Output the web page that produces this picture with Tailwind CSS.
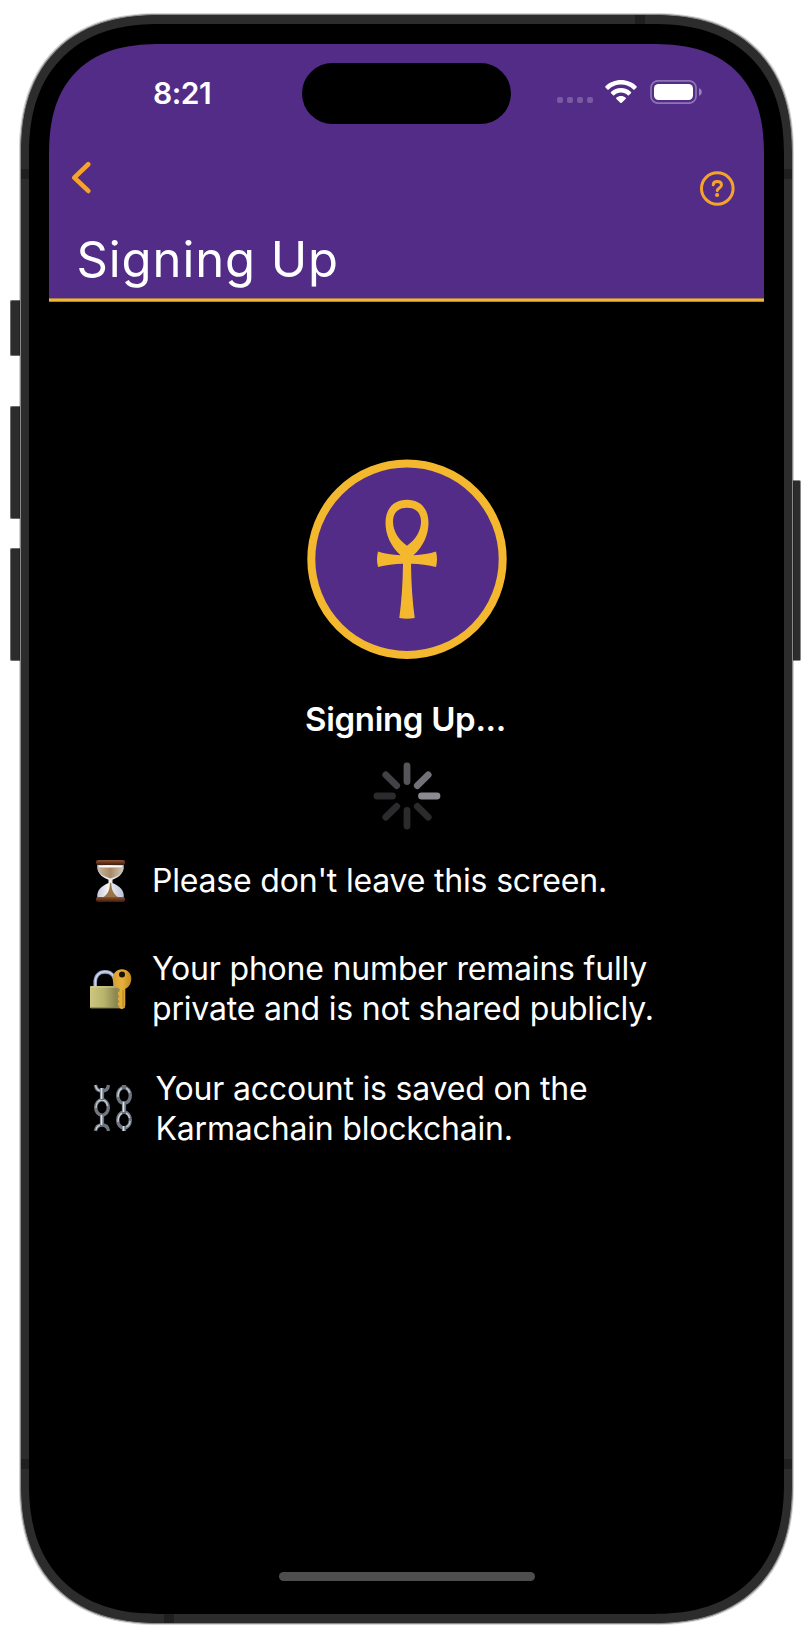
<!DOCTYPE html>
<html lang="en">
<head>
<meta charset="utf-8">
<title>Signing Up</title>
<script src="https://cdn.jsdelivr.net/npm/@tailwindcss/browser@4"></script>
</head>
<body class="bg-white font-['Inter',sans-serif] text-white">
<div class="relative w-[812px] h-[1628px] overflow-hidden pl-5 pt-3.5">
  <!-- side buttons -->
  <div class="absolute left-[10px] top-[300px] w-[10px] h-[56px] bg-[#2c2c2c] border border-r-0 border-[#6d6d6d] rounded-l-[2px]"></div>
  <div class="absolute left-[10px] top-[406px] w-[10px] h-[113px] bg-[#2c2c2c] border border-r-0 border-[#6d6d6d] rounded-l-[2px]"></div>
  <div class="absolute left-[10px] top-[548px] w-[10px] h-[113px] bg-[#2c2c2c] border border-r-0 border-[#6d6d6d] rounded-l-[2px]"></div>
  <div class="absolute left-[792px] top-[480px] w-[9px] h-[181px] bg-[#2c2c2c] border border-l-0 border-[#8a8a8a] rounded-r-[2px]"></div>

  <div class="relative w-[773px] h-[1610px] rounded-[122px] supports-[corner-shape:round]:rounded-[140px] [corner-shape:superellipse(1.235)] border border-[#8a8a8a] bg-[#2c2c2c] pt-[9px] px-2 pb-[9px] overflow-hidden shadow-[0_0_0_1px_rgba(0,0,0,0.17)]">
    <!-- antenna bands -->
    <div class="absolute left-0 top-[154px] w-full h-[10px] bg-[#1f1f1f]"></div>
    <div class="absolute left-0 top-[1444px] w-full h-[10px] bg-[#1f1f1f]"></div>
    <div class="absolute left-[614px] top-0 w-[10px] h-3 bg-[#1f1f1f]"></div>
    <div class="absolute left-[143px] bottom-0 w-[10px] h-3 bg-[#1f1f1f]"></div>

    <div class="relative w-full h-full rounded-[114px] supports-[corner-shape:round]:rounded-[131px] [corner-shape:superellipse(1.235)] bg-black pt-5 px-5 pb-5">
      <main class="relative flex flex-col items-center w-[715px] h-[1549px] rounded-[94px] supports-[corner-shape:round]:rounded-[112px] [corner-shape:superellipse(1.3)] bg-black overflow-hidden">
        <header class="flex flex-col w-full h-[258px] shrink-0 bg-[#522c86]">
          <div class="flex h-[98px] w-full items-center">
            <div class="ml-[104px] w-[150px] text-[30px] font-semibold leading-[40px] tracking-[-0.5px]">8:21</div>
            <div class="ml-[-1px] mt-px w-[209px] h-[61px] rounded-full bg-black"></div>
            <div class="ml-[46px] mt-[14px] flex gap-[4px]">
              <i class="w-[6px] h-[6px] rounded-[2px] bg-[#7a5ba2]"></i><i class="w-[6px] h-[6px] rounded-[2px] bg-[#7a5ba2]"></i><i class="w-[6px] h-[6px] rounded-[2px] bg-[#7a5ba2]"></i><i class="w-[6px] h-[6px] rounded-[2px] bg-[#7a5ba2]"></i>
            </div>
            <svg class="ml-[12px] w-8 h-6 -mt-[3px]" viewBox="0 0 32 24" fill="#fff">
              <path d="M16 0C22 0 27.600 2.300 31.500 6.200Q32.100 6.900 31.500 7.600L29.600 9.500Q29 10.100 28.300 9.500C25 6.300 20.600 4.600 16 4.600S7 6.300 3.700 9.500Q3 10.100 2.400 9.500L.5 7.600Q-.1 6.900.5 6.200C4.400 2.300 10 0 16 0Z"/>
              <path d="M16 8C19.900 8 23.400 9.500 26 12Q26.600 12.700 26 13.300L23.900 15.300Q23.300 15.900 22.700 15.300C20.900 13.600 18.600 12.600 16 12.600S11.100 13.600 9.300 15.300Q8.700 15.900 8.100 15.300L6 13.300Q5.400 12.700 6 12C8.600 9.500 12.100 8 16 8Z"/>
              <path d="M16 16C17.800 16 19.400 16.600 20.600 17.600Q21.300 18.200 20.600 18.900L16.700 22.700Q16 23.400 15.300 22.700L11.400 18.900Q10.700 18.200 11.400 17.600C12.600 16.600 14.200 16 16 16Z"/>
            </svg>
            <svg class="ml-[13px] w-[54px] h-6 -mt-[3px]" viewBox="0 0 54 24" fill="none">
              <rect x="1" y=".8" width="45" height="22.400" rx="7" stroke="#8f74b2" stroke-width="1.700"/>
              <rect x="4" y="4" width="39" height="16" rx="4.500" fill="#fff"/>
              <path d="M49 8.200V15.800C50.700 15.200 51.800 13.700 51.800 12S50.700 8.800 49 8.200Z" fill="#9a82ba"/>
            </svg>
          </div>
          <div class="flex h-[88px] justify-between">
            <svg class="ml-[20px] mt-[17px] w-6 h-9" viewBox="0 0 24 36" fill="none" stroke="#f5a32b" stroke-width="4.700" stroke-linecap="round" stroke-linejoin="round"><path d="M19.300 5.300L5.300 18.600 19.300 31.900"/></svg>
            <svg class="mr-[28px] mt-[28px] w-9 h-9" viewBox="0 0 36 36" fill="none" stroke="#f5a32b" stroke-linecap="round"><circle cx="17.300" cy="18.500" r="15.800" stroke-width="3"/><path d="M13.200 14.900C13.200 12.700 14.900 11.500 17.300 11.500C19.900 11.500 21.500 12.800 21.500 14.900C21.500 17.900 17.400 17.900 17.200 20.700" stroke-width="2.900"/><circle cx="17.100" cy="25" r="2.100" fill="#f5a32b" stroke="none"/></svg>
          </div>
          <h1 class="ml-[27.5px] text-[49px] font-normal leading-[60px] whitespace-nowrap tracking-[0.9px]">Signing Up</h1>
          <div class="mt-auto h-1 w-full shrink-0 border-y border-[#a87c4a] border-b-[#b08624] bg-[#f4b82e]"></div>
        </header>

        <svg class="mt-[157px] w-[200px] h-[200px] shrink-0" viewBox="0 0 200 200">
          <circle cx="100" cy="100.300" r="95.700" fill="#522c86" stroke="#f4b82e" stroke-width="8"/>
          <path fill="#f4b82e" fill-rule="evenodd" transform="translate(0 .3)" d="M93.500 96C83.500 87 78.500 75 78.500 63.500C78.500 49 87 40.500 100 40.500S121.500 49 121.500 63.500C121.500 75 116.500 87 106.500 96C115 95.600 122.500 94.400 129 92.300Q131 100 129 107.700C121.500 105.600 112.500 104.700 104 104.400C104.200 124 105.500 142 107.700 158.700Q100 160.300 92.300 158.700C94.500 142 95.800 124 96 104.400C87.500 104.700 78.500 105.600 71 107.700Q69 100 71 92.300C77.500 94.400 85 95.600 93.500 96ZM100 86.500C108.500 80.500 114 71.500 114 62.500C114 53.500 109 48.500 100 48.500S86 53.500 86 62.500C86 71.500 91.500 80.500 100 86.500Z"/>
        </svg>

        <p class="mt-[38px] mr-[2px] h-[44px] text-[33px] font-semibold leading-[44px] whitespace-nowrap tracking-[-0.32px]">Signing Up...</p>

        <svg class="mt-[21px] w-[68px] h-[68px] shrink-0" viewBox="-34 -34 68 68" stroke-width="6.800" stroke-linecap="round">
          <path d="M0-30V-14.500" stroke="#56555a"/>
          <path d="M21.200-21.200L10.300-10.300" stroke="#727177"/>
          <path d="M30 0H14.500" stroke="#8b8a91"/>
          <path d="M21.200 21.200L10.300 10.300M0 30V14.500M-21.200 21.200L-10.300 10.300M-30 0H-14.500" stroke="#2b2b2d"/>
          <path d="M-21.200-21.200L-10.300-10.300" stroke="#424145"/>
        </svg>

        <ul class="mt-[31px] w-full pl-[38px] text-[32px] leading-[40px] tracking-[-0.19px] whitespace-nowrap">
          <li class="flex items-center">
            <svg class="w-[46px] h-[46px] -my-1 shrink-0" viewBox="0 0 46 46">
              <defs>
                <linearGradient id="wood" x2="0" y2="1"><stop stop-color="#8c5334"/><stop offset=".5" stop-color="#69351d"/><stop offset="1" stop-color="#3e1c0d"/></linearGradient>
                <linearGradient id="sand" x2="1" y2="0"><stop stop-color="#c6b7a2"/><stop offset=".5" stop-color="#a98965"/><stop offset="1" stop-color="#d2c8bb"/></linearGradient>
                <linearGradient id="glass" x2="1" y2="0"><stop stop-color="#c6cadb"/><stop offset=".4" stop-color="#f4f3f3"/><stop offset="1" stop-color="#b9c3d9"/></linearGradient>
              </defs>
              <path fill="url(#glass)" d="M10.500 6H36.500C38 14 33 19 25.500 21.700V25C33 28 38 33 36.500 40H10.500C9 33 14 28 21.500 25V21.700C14 19 9 14 10.500 6Z"/>
              <path fill="url(#sand)" d="M10.500 9.500H36.500C36 15 31.500 18.200 23.500 20.500C15.500 18.200 11 15 10.500 9.500Z"/>
              <path fill="#9a7447" d="M23 25H24.200C24.500 33 27 36 31.500 39.500H16C20.500 36 22.700 33 23 25Z"/>
              <path stroke="#fff" stroke-width="1.200" d="M12 8.500H35"/>
              <rect x="9" y="2" width="29" height="5" rx="2.200" fill="url(#wood)"/>
              <rect x="9" y="39" width="29" height="5" rx="2.200" fill="url(#wood)"/>
            </svg>
            <span class="ml-[19px]">Please don't leave this screen.</span>
          </li>
          <li class="mt-12 flex items-center">
            <svg class="w-[46px] h-[46px] mt-[2px] shrink-0" viewBox="0 0 46 46">
              <defs>
                <linearGradient id="brass" x2="1" y2="0"><stop stop-color="#cdc780"/><stop offset=".4" stop-color="#b8b36d"/><stop offset=".75" stop-color="#8b8650"/><stop offset="1" stop-color="#a9a35e"/></linearGradient>
                <linearGradient id="gold" x2="1" y2="0"><stop stop-color="#d9a02a"/><stop offset=".5" stop-color="#e6b23c"/><stop offset="1" stop-color="#c18a1e"/></linearGradient>
              </defs>
              <path fill="none" stroke="#93a2c6" stroke-width="3.600" d="M8.200 22V15.500C8.200 8.500 12.500 4.900 18 4.900S28 8.500 28 15.500V22"/>
              <path fill="none" stroke="#d4ddef" stroke-width="1.200" d="M8.200 20V15.500C8.200 8.500 12.500 4.700 18 4.700S27 7.500 28 14"/>
              <rect x="3" y="19" width="35" height="22.300" rx="1" fill="url(#brass)"/>
              <path stroke="#dcd795" stroke-width=".8" d="M3.500 20H37.500"/><path stroke="#8a8450" stroke-width=".9" d="M3.500 40.700H37.500"/>
              <path fill="url(#gold)" d="M35 2.300C40.300 2.300 44.300 6.300 44.300 11.400C44.300 16 41.800 20.500 38.300 21.800V38.500L35.300 42.200 32.300 41V39L31 38V36L32.700 34.600 31 33V30.800L32.700 29.500 31 28V25.500L32.700 24V21.800C28.700 20.500 25.700 16 25.700 11.400C25.700 6.300 29.700 2.300 35 2.300Z"/>
              <circle cx="35" cy="7.500" r="3" fill="#171206"/><path d="M36 23V40" stroke="#a9781c" stroke-width=".9"/>
            </svg>
            <span class="ml-[19px]">Your phone number remains fully<br>private and is not shared publicly.</span>
          </li>
          <li class="mt-10 flex items-center">
            <svg class="ml-[6px] mb-[2px] w-[42px] h-[48px] shrink-0" viewBox="0 0 42 48" fill="none">
              <g stroke="#6f7680" stroke-width="3.400">
                <path d="M2.500 1C3 5 5.500 7 9 7S15 5 15.500 1"/><ellipse cx="9" cy="23.500" rx="6.300" ry="7.700"/><path d="M2.500 47C3 43 5.500 41 9 41S15 43 15.500 47"/>
                <ellipse cx="31" cy="11.500" rx="6.300" ry="8"/><ellipse cx="31" cy="36" rx="6.300" ry="8"/>
              </g>
              <g stroke="#c9ced6" stroke-width="1.300">
                <path d="M2.500 1C3 5 5.500 7 9 7M3 24C3 19 5.500 16 9 16S14 19 14.500 22M3 46C3.500 43 6 41 9 41"/>
                <path d="M25 13C25 7 27.500 4 31 4S36 6 36.500 9M25 38C25 32 27.500 29 31 29S36 31 36.500 34M33 43C35 42 37 40 37 37"/>
              </g>
              <path stroke="#69717b" stroke-width="4.200" d="M9 4V16M9 30V42M31 17V30M31 42V47M31 1V5"/>
              <path stroke="#dde1e7" stroke-width="1.700" d="M8.500 4V15M8.500 31V41M30.500 18V28M30.500 42V47"/>
            </svg>
            <span class="ml-[20.5px]">Your account is saved on the<br>Karmachain blockchain.</span>
          </li>
        </ul>
        <div class="mt-auto mb-[12px] w-[256px] h-[9px] rounded-full bg-[#4e4e4e] shrink-0"></div>
      </main>
    </div>
  </div>
</div>
</body>
</html>
